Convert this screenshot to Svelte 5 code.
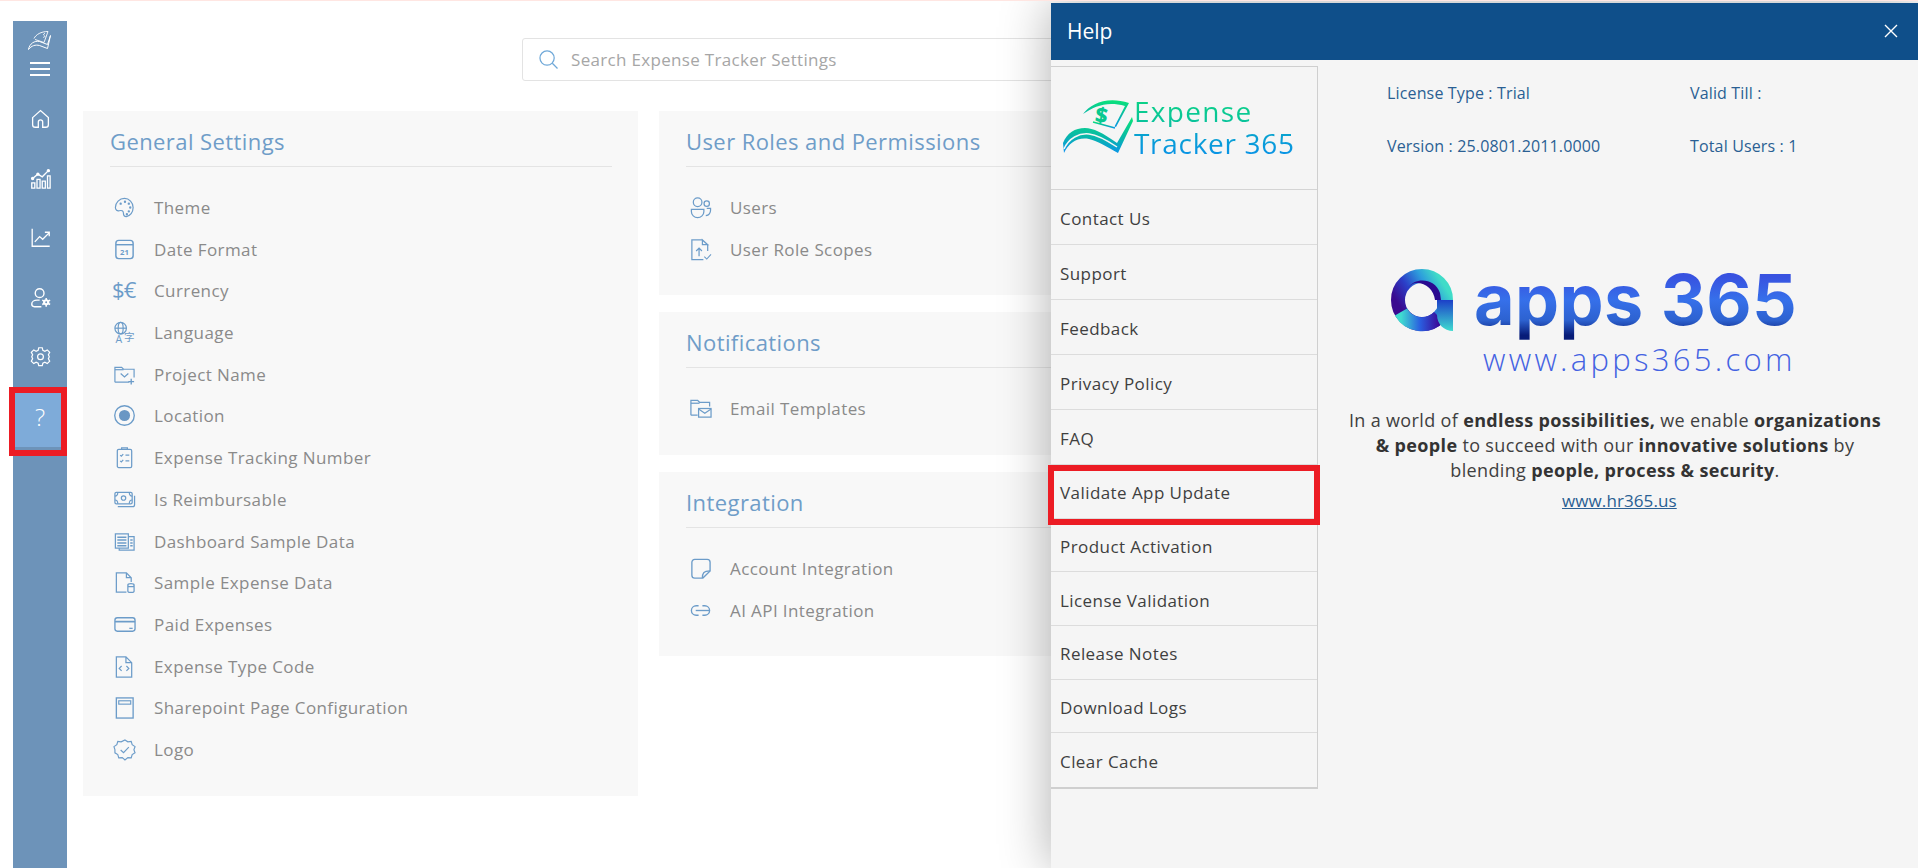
<script>
  const icons = {
    theme: '<path d="M12 2.500a9.500 9.500 0 0 0-9.500 9.500c0 2.600 2 4 4 3.400 2.600-.8 4.400.2 4.400 2.600 0 2.400 1 3.500 3 3.500 4-.5 7.100-4.500 7.100-9.500 0-5.300-4.200-9.500-9-9.500z"/><circle cx="8" cy="8" r=".6"/><circle cx="12.500" cy="6" r=".6"/><circle cx="16.500" cy="8" r=".6"/><circle cx="18" cy="12" r=".6"/><circle cx="16.500" cy="16" r=".6"/><circle cx="14.500" cy="19" r=".6"/>',
    date: '<rect x="3" y="2.500" width="18" height="19" rx="3" stroke-width="1.500"/><path d="M3 7h18" stroke-width="1.500"/><text x="12" y="17.500" class="t21">21</text>',
    currency: '<text x="-1" y="20" class="tcur">$€</text>',
    language: '<circle cx="8" cy="7.500" r="6"/><ellipse cx="8" cy="7.500" rx="2.600" ry="6"/><path d="M2 7.500h12"/><text x="2.500" y="23" class="tlang">A</text><text x="11.500" y="20.500" class="tzi">字</text>',
    project: '<path d="M2 20V4.500h7l2 2h11V15M2 20h15"/><path d="M2 7h9"/><path d="M8 11l4 3.500 4-3.500"/><path d="M19 16.500v6M16 19.500h6" stroke-width="1.400"/>',
    location: '<circle cx="12" cy="12" r="10.200" stroke-width="1.400"/><circle cx="12" cy="12" r="5.800" class="fill"/>',
    tracking: '<rect x="4.500" y="3.500" width="15" height="19" rx="1.500" stroke-width="1.300"/><path d="M9 3.500V2h6v1.500" stroke-width="1.300"/><path d="M7.500 9.500l1.200 1.200 2-2.200M13 9.500h4M7.500 15.500l1.200 1.200 2-2.200M13 15.500h4"/>',
    reimb: '<rect x="2" y="4.500" width="18" height="12" rx="1.500" stroke-width="1.300"/><circle cx="11" cy="10.500" r="2.300"/><path d="M2 8.500c2 0 3-1 3-4M20 8.500c-2 0-3-1-3-4M2 12.500c2 0 3 1 3 4M20 12.500c-2 0-3 1-3 4"/><path d="M22.500 8v9.500a2 2 0 0 1-2 2H5" stroke-width="1.300"/>',
    dashboard: '<path d="M2.500 4h13.500v15H2.500z" stroke-width="1.300"/><path d="M16 7h6v14H6.500v-2" stroke-width="1.300"/><path d="M4.500 7.500h9.500M4.500 10.500h9.500M4.500 13.500h9.500M4.500 16.500h9.500M18 10.500h2.500M18 13.500h2.500M18 16.500h2.500" stroke-width="1.500"/>',
    sample: '<path d="M14 22H3.500V2H14l5 5v4.500M14 2v5h5" stroke-width="1.300"/><path d="M15.500 14.500v6.500c0 1.800 6.500 1.800 6.500 0v-6.500c0-1.800-6.500-1.800-6.500 0zM15.500 15c0 1.700 6.500 1.700 6.500 0" stroke-width="1.300"/>',
    paid: '<rect x="2" y="5" width="21" height="14" rx="2.500" stroke-width="1.400"/><path d="M2 9h21" stroke-width="1.800"/><path d="M17 16h3.500" stroke-width="1.300"/>',
    code: '<path d="M13.500 2H3.500v21h16V8l-6-6zM13.500 2v6h6" stroke-width="1.300"/><path d="M9 11.500l-2.500 2.500 2.500 2.500M14 11.500l2.500 2.500-2.500 2.500"/>',
    sharepoint: '<rect x="3.500" y="2" width="17.500" height="21" stroke-width="1.400"/><rect x="6" y="5" width="12.500" height="3.500" stroke-width="1.200"/>',
    logo: '<path d="M12.500 2l3 2 3.500-.5 1 3.500 3 2-1.200 3.200 1.200 3.300-3 1.800-1 3.500-3.500-.3-3 2.500-2.800-2.500-3.700.3-1-3.500-3-1.800L2 12l-1-3 3-2 1-3.500 3.500.5z" stroke-width="1.200"/><path d="M8 12.500l3 2.800 5.500-5.800" stroke-width="1.200"/>',
    users: '<circle cx="9" cy="6.500" r="4.500" stroke-width="1.300"/><circle cx="18.500" cy="8" r="2.800" stroke-width="1.300"/><path d="M2.500 14h13v2.500a6.500 6 0 0 1-13 0zM18.500 13h4v1.500c0 3-2 5.500-5 6" stroke-width="1.300"/>',
    scopes: '<path d="M14 2H3v20.500h12M14 2v5h5.500L14 2zM19.500 7v6.500" stroke-width="1.300"/><path d="M10.500 19v-8M7.500 13.500l3-3 3 3" stroke-width="1.300"/><path d="M16 19.500l2.500 2.500 4.500-5" stroke-width="1.100"/>',
    email: '<path d="M2 19V3.500h7l2 2h10.500V10M2 19h7" stroke-width="1.300"/><path d="M2 6.500h9" stroke-width="1.300"/><rect x="10" y="12" width="13" height="9" stroke-width="1.300"/><path d="M10 12.500l6.500 4.500 6.500-4.500" stroke-width="1.200"/>',
    account: '<path d="M6 2.500h13a3 3 0 0 1 3 3v9l-7.500 7.500H6a3 3 0 0 1-3-3v-13.500a3 3 0 0 1 3-3z" stroke-width="1.400"/><path d="M14 22c0-5 1-7.500 8-7.500" stroke-width="1.400"/>',
    link: '<path d="M10 7H7.500a5 5 0 0 0 0 10H10M14 7h2.500a5 5 0 0 1 0 10H14" stroke-width="1.400"/><path d="M7 12h14" stroke-width="1.400"/>'
  };

  const general = [
    ['Theme', 'theme'], ['Date Format', 'date'], ['Currency', 'currency'], ['Language', 'language'],
    ['Project Name', 'project'], ['Location', 'location'], ['Expense Tracking Number', 'tracking'],
    ['Is Reimbursable', 'reimb'], ['Dashboard Sample Data', 'dashboard'], ['Sample Expense Data', 'sample'],
    ['Paid Expenses', 'paid'], ['Expense Type Code', 'code'], ['Sharepoint Page Configuration', 'sharepoint'],
    ['Logo', 'logo']
  ];
  const sections = [
    { title: 'User Roles and Permissions', items: [['Users', 'users'], ['User Role Scopes', 'scopes']] },
    { title: 'Notifications', items: [['Email Templates', 'email']] },
    { title: 'Integration', items: [['Account Integration', 'account'], ['AI API Integration', 'link']] }
  ];
  const helpLinks = ['Contact Us', 'Support', 'Feedback', 'Privacy Policy', 'FAQ', 'Validate App Update',
    'Product Activation', 'License Validation', 'Release Notes', 'Download Logs', 'Clear Cache'];
</script>

{#snippet rows(items)}
  <ul class="rows">
    {#each items as [label, icon]}
      <li>
        <svg class="row-icon" viewBox="0 0 24 24">{@html icons[icon]}</svg>
        <span>{label}</span>
      </li>
    {/each}
  </ul>
{/snippet}

<div class="page">
  <aside class="sidebar">
    <div class="brand">
      <svg class="brand-logo" viewBox="0 0 24 20" fill="none" stroke="#fff" stroke-width="1.100">
        <path d="M6 8c2-4 7-7 14-7l-4 11-9-3M17 3c-1.500 0-2 1.500-.8 2s.5 2-1 1.800" stroke-width=".9"/>
        <path d="M0.500 19c1-6 6-9 11-8l8 3 3-9-3 13-8-3c-4-1-8 0-11 4z" stroke-width="1"/>
      </svg>
      <span class="burger"><i></i><i></i><i></i></span>
    </div>
    <nav>
      <div class="nav-item">
        <svg viewBox="0 0 24 24"><path d="M3 11l9-8 9 8v8a3 3 0 0 1-3 3h-3.500v-6a2.500 2.500 0 0 0-5 0v6H6a3 3 0 0 1-3-3z"/></svg>
      </div>
      <div class="nav-item">
        <svg viewBox="0 0 24 24"><path d="M2 17h3.500v6H2zM8 13h3.500v10H8zM14 15h3.500v8H14zM20 9h3v14h-3z" stroke-width="1.500"/><path d="M3 12l6-5 5 3 7-7" stroke-width="1.600"/><circle cx="3" cy="12" r="1.200" fill="#fff"/><circle cx="9" cy="7" r="1.200" fill="#fff"/><circle cx="21" cy="3" r="1.200" fill="#fff"/></svg>
      </div>
      <div class="nav-item">
        <svg viewBox="0 0 24 24"><path d="M2.500 2v20h20" stroke-width="1.500"/><path d="M5.500 17l5.500-6 3.500 3 7-7M17 6h5v4.500" stroke-width="1.500"/></svg>
      </div>
      <div class="nav-item">
        <svg viewBox="0 0 24 24"><circle cx="11" cy="7" r="5" stroke-width="1.600"/><path d="M11 15H8a6 4.500 0 0 0-6 4.500c0 2 1 3 3 3h8" stroke-width="1.600"/><circle cx="18.500" cy="17.500" r="3.500" fill="#fff" stroke="none"/><path d="M18.500 12.500v10M14 15l9 5M14 20l9-5" stroke-width="1.700"/><circle cx="18.500" cy="17.500" r="1.100" fill="#6d93b9" stroke="none"/></svg>
      </div>
      <div class="nav-item">
        <svg viewBox="0 0 24 24"><path d="M10 2h4l.7 3 2.300 1 2.700-1.500 2.800 2.800L21 10l1 2.200 0 .100-1 2.300 1.500 2.700-2.800 2.800L17 18.600 14.700 19.600 14 22.500h-4l-.7-2.900-2.300-1-2.700 1.500-2.800-2.800L3 14.600l-1-2.300 1-2.300-1.500-2.700 2.800-2.800L7 6l2.300-1z" stroke-width="1.400"/><circle cx="12" cy="12.300" r="3.300" stroke-width="1.400"/></svg>
      </div>
      <div class="nav-item active"><span>?</span></div>
    </nav>
  </aside>

  <main>
    <div class="search">
      <svg viewBox="0 0 20 20"><circle cx="8.500" cy="8.500" r="7.500"/><path d="M14 14l5.500 5.500"/></svg>
      <span>Search Expense Tracker Settings</span>
    </div>
    <div class="columns">
      <section class="card">
        <h2>General Settings</h2>
        {@render rows(general)}
      </section>
      <div class="stack">
        {#each sections as s}
          <section class="card">
            <h2>{s.title}</h2>
            {@render rows(s.items)}
          </section>
        {/each}
      </div>
    </div>
  </main>

  <div class="panel">
    <header>
      <span>Help</span>
      <svg viewBox="0 0 14 14"><path d="M1 1l12 12M13 1L1 13"/></svg>
    </header>
    <div class="panel-body">
      <div class="menu">
        <div class="product">
          <svg viewBox="0 0 70 58" fill="none">
            <defs>
              <linearGradient id="pg" x1="0.600" y1="0" x2="0.500" y2="1">
                <stop offset="0" stop-color="#0be27a"/><stop offset=".55" stop-color="#08b8a8"/><stop offset="1" stop-color="#0a93ea"/>
              </linearGradient>
            </defs>
            <path d="M20 17C28 6 45-1 66 6l-13 24-1.500-.5L62 9C44 4 32 9 20 17z" fill="url(#pg)"/>
            <path d="M30 25l22 6" stroke="url(#pg)" stroke-width="1.600"/>
            <text x="32.500" y="25.500" class="dollar" transform="rotate(10 38 18)">$</text>
            <path d="M0 46C4 36 12 31 22 31 30 31 40 36 54 46L69 20l1 4-15 32C44 50 35 44 26 42 14 40 6 46 1 56z" fill="url(#pg)"/>
            <path d="M1 52C6 41 16 36 26 37 35 38 45 44 54 50" stroke="#f5f5f5" stroke-width="1.500"/>
          </svg>
          <div class="product-name"><span class="pn1">Expense</span><span class="pn2">Tracker 365</span></div>
        </div>
        <ul>
          {#each helpLinks as link}
            <li class:marked={link === 'Validate App Update'}>{link}</li>
          {/each}
        </ul>
      </div>
      <div class="about">
        <div class="license">
          <span>License Type : Trial</span><span>Valid Till :</span>
          <span>Version : 25.0801.2011.0000</span><span>Total Users : 1</span>
        </div>
        <div class="apps">
          <svg viewBox="0 0 63 64" fill="none">
            <defs>
              <linearGradient id="ag" x1="0.050" y1="0.650" x2="0.900" y2="0.100">
                <stop offset="0" stop-color="#3a0a8f"/><stop offset=".35" stop-color="#2b3fc8"/><stop offset=".7" stop-color="#2d9ddc"/><stop offset="1" stop-color="#40dcc8"/>
              </linearGradient>
              <linearGradient id="ag3" x1="0" y1="0" x2="0" y2="1">
                <stop offset="0" stop-color="#1c3fc8"/><stop offset="1" stop-color="#3fdcd0"/>
              </linearGradient>
              <linearGradient id="ag4" x1="0" y1="0" x2="1" y2="0">
                <stop offset="0" stop-color="#40dcd0"/><stop offset=".5" stop-color="#2a5fe0"/><stop offset="1" stop-color="#3a0a98"/>
              </linearGradient>
            </defs>
            <circle cx="31" cy="32" r="24" stroke="url(#ag)" stroke-width="14"/>
            <path d="M10 44a24 24 0 0 0 38 5" stroke="url(#ag4)" stroke-width="14"/>
            <path d="M17 20C24 9 44 10 49 25l1 7h-6C43 22 35 15 26 15c-4 0-7 2-9 5z" fill="#2a0a90"/>
            <path d="M46 32h16v31c-9 0-16-7-16-16z" fill="url(#ag3)"/>
          </svg>
          <span>apps 365</span>
        </div>
        <div class="apps-url">www.apps365.com</div>
        <p>In a world of <b>endless possibilities,</b> we enable <b>organizations</b><br/>
          <b>&amp; people</b> to succeed with our <b>innovative solutions</b> by<br/>
          blending <b>people, process &amp; security</b>.</p>
        <a href="#top">www.hr365.us</a>
      </div>
    </div>
  </div>
</div>

<style>
  :global(body) {
    background: #fff;
    overflow: hidden;
  }
  .page {
    position: relative;
    display: flex;
    box-sizing: border-box;
    width: 1918px;
    height: 868px;
    padding: 21px 0 0 13px;
    overflow: hidden;
    border-top: 1px solid #ffe6e2;
    font-family: "Open Sans", "Liberation Sans", sans-serif;
  }
  .sidebar {
    width: 54px;
    height: 850px;
    flex: none;
    margin-top: -1px;
    background: #6d93b9;
  }
  .brand {
    display: flex;
    flex-direction: column;
    align-items: center;
    height: 68px;
    padding-top: 9px;
    box-sizing: border-box;
  }
  .brand-logo {
    width: 24px;
    height: 21px;
  }
  .burger {
    display: flex;
    flex-direction: column;
    gap: 4.500px;
    margin-top: 11px;
  }
  .burger i {
    display: block;
    width: 20px;
    height: 1.500px;
    background: #fff;
  }
  .nav-item {
    position: relative;
    display: flex;
    align-items: center;
    justify-content: center;
    height: 59.500px;
  }
  .nav-item svg {
    width: 21px;
    height: 21px;
    fill: none;
    stroke: #fff;
    stroke-width: 1.500;
    overflow: visible;
  }
  .nav-item.active::before {
    content: "";
    position: absolute;
    inset: 5.500px 6px -4px 2px;
    background: #7eabd9;
    border-bottom: 3px solid #6d93b9;
  }
  .nav-item.active::after {
    content: "";
    position: absolute;
    inset: 0 0 -10px -4px;
    border: 6px solid #ec1c24;
  }
  .nav-item.active span {
    position: relative;
    color: #fff;
    font-size: 24px;
    font-weight: 300;
  }
  main {
    margin-left: 16px;
  }
  .search {
    display: flex;
    align-items: center;
    gap: 13px;
    box-sizing: border-box;
    width: 900px;
    height: 43px;
    margin: 16px 0 30px 439px;
    padding-left: 16px;
    border: 1px solid #e3e3e3;
    border-radius: 3px;
    color: #a6a6a6;
    font-size: 17px;
    letter-spacing: 0.320px;
  }
  .search svg {
    width: 19px;
    height: 19px;
    fill: none;
    stroke: #6fa8d8;
    stroke-width: 1.300;
  }
  .columns {
    display: flex;
    align-items: flex-start;
    gap: 21px;
  }
  .stack {
    display: flex;
    flex-direction: column;
    gap: 17.500px;
  }
  .card {
    box-sizing: border-box;
    width: 555px;
    padding: 0 26px 25px 27px;
    background: #f8f8f8;
  }
  h2 {
    height: 56px;
    margin: 0;
    border-bottom: 1px solid #e4e4e4;
    box-sizing: border-box;
    color: #6f9dc8;
    font-size: 22px;
    font-weight: 400;
    letter-spacing: 0.420px;
    line-height: 61px;
  }
  .rows {
    margin: 0;
    padding: 19.500px 0 0;
    list-style: none;
  }
  .rows li {
    display: flex;
    align-items: center;
    gap: 18px;
    height: 41.720px;
    color: #8a8a8a;
    font-size: 17px;
    letter-spacing: 0.400px;
  }
  .row-icon {
    width: 23px;
    height: 23px;
    margin-left: 3px;
    flex: none;
    fill: none;
    stroke: #6c9cc9;
    stroke-width: 1.250;
    overflow: visible;
  }
  .row-icon :global(.fill) {
    fill: #6a97c4;
    stroke: none;
  }
  .row-icon :global(text) {
    fill: #6c9cc9;
    stroke: none;
    font-family: "Open Sans", sans-serif;
    letter-spacing: 0;
  }
  .row-icon :global(.t21) {
    font-size: 8px;
    font-weight: 700;
    text-anchor: middle;
  }
  .row-icon :global(.tcur) {
    font-size: 23px;
    font-weight: 400;
    letter-spacing: -1px;
  }
  .row-icon :global(.tlang) {
    font-size: 11px;
  }
  .row-icon :global(.tzi) {
    font-size: 11px;
    font-family: "Noto Sans CJK SC", sans-serif;
  }
  .panel {
    position: absolute;
    top: 2px;
    left: 1051px;
    right: 0;
    bottom: 0;
    background: #f5f5f5;
    box-shadow: 0 0 48px rgba(0, 0, 0, 0.32);
  }
  .panel header {
    display: flex;
    align-items: center;
    justify-content: space-between;
    height: 57px;
    padding: 0 20px 2px 16px;
    box-sizing: border-box;
    background: #0f4f8a;
    color: #fff;
    font-size: 21px;
  }
  .panel header svg {
    width: 14px;
    height: 14px;
    fill: none;
    stroke: #fff;
    stroke-width: 1.400;
  }
  .panel-body {
    display: flex;
    align-items: flex-start;
  }
  .menu {
    box-sizing: border-box;
    width: 267px;
    margin-top: 6px;
    border: solid #cfcfcf;
    border-width: 1px 1px 2px 0;
  }
  .product {
    display: flex;
    align-items: center;
    gap: 1px;
    height: 123px;
    box-sizing: border-box;
    padding-left: 12px;
    border-bottom: 1px solid #d4d4d4;
  }
  .product svg {
    width: 70px;
    height: 58px;
    flex: none;
    margin-bottom: 5px;
    overflow: visible;
  }
  .product svg text.dollar {
    fill: #07c98f;
    font-size: 21px;
    font-weight: 800;
    font-family: "Open Sans", sans-serif;
  }
  .product-name {
    display: flex;
    flex-direction: column;
    margin-bottom: 3px;
    font-size: 28px;
    font-weight: 500;
    letter-spacing: 0.700px;
    line-height: 32px;
  }
  .pn1 {
    background: linear-gradient(180deg, #0cd680, #08bfa0);
    -webkit-background-clip: text;
    background-clip: text;
    color: transparent;
    letter-spacing: 1.300px;
  }
  .pn2 {
    background: linear-gradient(180deg, #08a8c8, #0a90ea);
    -webkit-background-clip: text;
    background-clip: text;
    color: transparent;
    white-space: nowrap;
  }
  .menu ul {
    margin: 0;
    padding: 0;
    list-style: none;
  }
  .menu li {
    position: relative;
    box-sizing: border-box;
    display: flex;
    align-items: center;
    height: 55px;
    padding: 3px 0 0 9px;
    border-bottom: 1px solid #dcdcdc;
    color: #3f3f3f;
    font-size: 17px;
    letter-spacing: 0.430px;
  }
  .menu li:nth-child(n + 6) {
    height: 53.700px;
  }
  .menu li:last-child {
    border-bottom: 0;
  }
  .menu li.marked::after {
    content: "";
    position: absolute;
    inset: 0 -3px -7px -3px;
    border: 6px solid #ec1c24;
  }
  .about {
    flex: 1;
    display: flex;
    flex-direction: column;
    align-items: flex-start;
  }
  .license {
    display: grid;
    grid-template-columns: 303px 1fr;
    row-gap: 31px;
    align-self: stretch;
    margin: 22px 0 0 69px;
    color: #2a5f93;
    font-size: 16px;
    letter-spacing: 0.150px;
    line-height: 22px;
  }
  .apps {
    display: flex;
    align-items: center;
    gap: 20px;
    margin: 101px 0 0 73px;
    height: 84px;
  }
  .apps svg {
    width: 63px;
    height: 64px;
  }
  .apps span {
    background: linear-gradient(180deg, #3852e0 22%, #3670ea 50%, #2d62d0 74%, #071c78 92%);
    -webkit-background-clip: text;
    background-clip: text;
    color: transparent;
    font-family: Inter, sans-serif;
    font-size: 70px;
    font-weight: 700;
    letter-spacing: 0.400px;
    line-height: 84px;
  }
  .apps-url {
    margin: 0 0 0 165px;
    color: #4362e2;
    font-size: 31px;
    font-weight: 300;
    letter-spacing: 3.300px;
    line-height: 34px;
  }
  .about p {
    width: 558px;
    margin: 31.500px 0 0 18px;
    color: #404040;
    font-size: 18px;
    letter-spacing: 0.350px;
    line-height: 25px;
    text-align: center;
    white-space: nowrap;
  }
  .about p b {
    color: #333;
    font-weight: 700;
  }
  .about a {
    margin: 6px 0 0 244px;
    color: #2a5f93;
    font-size: 17px;
    letter-spacing: 0.100px;
  }
</style>
